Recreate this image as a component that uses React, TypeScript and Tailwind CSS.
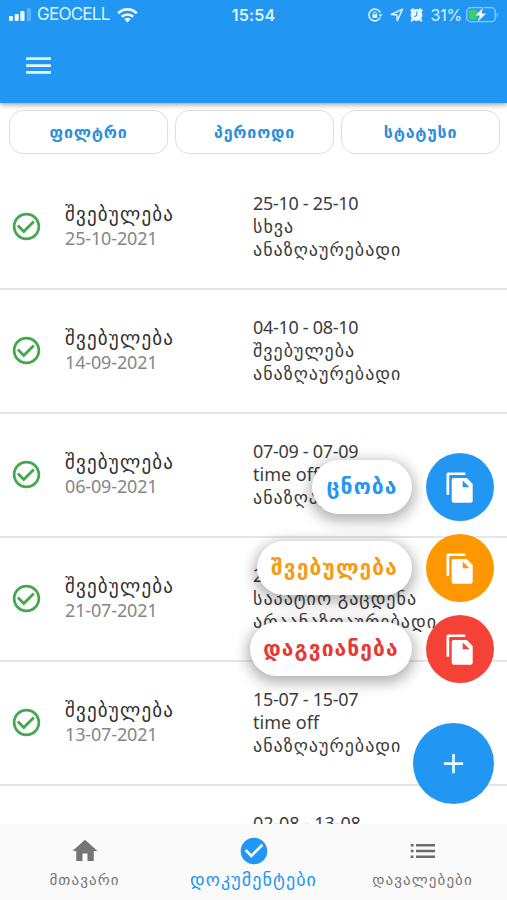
import { useState } from "react";
import {
  MdAdd,
  MdCheckCircle,
  MdCheckCircleOutline,
  MdHome,
  MdMenu,
} from "react-icons/md";

const filters = ["ფილტრი", "პერიოდი", "სტატუსი"];

const documents = [
  { date: "25-10-2021", period: "25-10 - 25-10", kind: "სხვა", pay: "ანაზღაურებადი" },
  { date: "14-09-2021", period: "04-10 - 08-10", kind: "შვებულება", pay: "ანაზღაურებადი" },
  { date: "06-09-2021", period: "07-09 - 07-09", kind: "time off", pay: "ანაზღაურებადი" },
  { date: "21-07-2021", period: "21-07 - 21-07", kind: "საპატიო გაცდენა", pay: "არაანაზღაურებადი" },
  { date: "13-07-2021", period: "15-07 - 15-07", kind: "time off", pay: "ანაზღაურებადი" },
];

const actions = [
  { label: "ცნობა", text: "text-[#2196f3]", bg: "bg-[#2196f3]", width: "w-[100px]" },
  { label: "შვებულება", text: "text-[#f59c13]", bg: "bg-[#ff9800]", width: "w-[155px]" },
  { label: "დაგვიანება", text: "text-[#e53935]", bg: "bg-[#f44336]", width: "w-[162px]" },
];

const StatusBar = () => (
  <div className="flex h-[29px] items-center px-[9px] font-['Inter',sans-serif] text-[#d9f3ff]">
    <div className="flex flex-1 items-center">
      <svg width="23" height="13" viewBox="0 0 23 13" fill="#e8faff">
        <rect x="0" y="8" width="4" height="5" rx="1" />
        <rect x="5.7" y="6" width="4" height="7" rx="1" />
        <rect x="11.3" y="3" width="4.2" height="10" rx="1" />
        <rect x="18" y="0" width="4" height="13" rx="1" opacity="0.3" />
      </svg>
      <span className="ml-[5px] text-[17px] tracking-[-0.75px]">GEOCELL</span>
      <svg className="ml-[7px]" width="21" height="16" viewBox="0 0 21 16" fill="none" stroke="#e8faff" strokeWidth="2.7">
        <path d="M1.2 6.2a13.2 13.2 0 0 1 18.6 0" />
        <path d="M4.8 9.8a8.2 8.2 0 0 1 11.4 0" />
        <path d="M7.3 12.2a4.7 4.7 0 0 1 6.4 0L10.5 15.5z" fill="#e8faff" stroke="none" />
      </svg>
    </div>
    <span className="text-[16px] font-semibold tracking-[0.2px]">15:54</span>
    <div className="flex flex-1 items-center justify-end">
      <svg width="15" height="14" viewBox="0 0 15 14" fill="none" stroke="#d9f3ff" strokeWidth="1.6">
        <path d="M12.2 4.5A5.9 5.9 0 1 0 12.2 9.5" />
        <path d="M10.4 6.2h4.2l-2.1 2.9z" fill="#d9f3ff" stroke="none" />
        <rect x="4.4" y="6.3" width="4.8" height="3.7" fill="#d9f3ff" stroke="none" />
        <path d="M5.3 6.5V5.3a1.5 1.5 0 0 1 3 0v1.2" strokeWidth="1" />
      </svg>
      <svg className="ml-[7px]" width="14" height="14" viewBox="0 0 14 14" fill="none" stroke="#d9f3ff" strokeWidth="1.5" strokeLinejoin="round">
        <path d="M12.5 1.3L1.3 6.4l5.5.7.5 5.5z" />
      </svg>
      <svg className="ml-[6px]" width="13" height="14" viewBox="0 0 13 14">
        <path d="M1.5 2.6L3 1.4M11.5 2.6L10 1.4M2.5 11.5l-.6 1M10.500 11.500l.6 1" stroke="#e8faff" strokeWidth="2.4" strokeLinecap="round" />
        <circle cx="6.5" cy="7" r="5.9" fill="#e8faff" />
        <path d="M6.8 3.5v4L4.3 8.8" fill="none" stroke="#2196f3" strokeWidth="1.1" />
      </svg>
      <span className="ml-[7px] text-[16px] tracking-[-0.2px]">31%</span>
      <svg className="ml-[4px] -mr-[1px]" width="33" height="18" viewBox="0 0 33 18">
        <rect x="0.7" y="1.7" width="28.6" height="14" rx="4" fill="none" stroke="#8fcbfa" strokeWidth="1.3" />
        <path d="M30.8 6.500c1.6.6 1.6 3.8 0 4.4z" fill="#8fcbfa" />
        <rect x="2.7" y="3.7" width="8.5" height="10" rx="2" fill="#3ccf6a" />
        <path d="M17.5 1L8.9 9.8h4.6L11 16.500l9.6-9.2h-4.8z" fill="#fff" stroke="#2196f3" strokeWidth="0.5" />
      </svg>
    </div>
  </div>
);

const ListIcon = () => (
  <svg width="26" height="30" viewBox="0 0 26 30" fill="#6b6b6b">
    <path d="M.7 8h2.8v2.6H.7zM.7 13.700h2.8v2.6H.7zM.7 19.400h2.8v2.6H.7zM6 8h19v2.6H6zM6 13.700h19v2.6H6zM6 19.400h19v2.6H6z" />
  </svg>
);

const CopyIcon = () => (
  <svg width="28" height="32" viewBox="0 0 28 32" fill="#fff">
    <path d="M.5 3a1.500 1.500 0 0 1 1.500-1.500h17.300v2.600H3.200v19.600H.5z" />
    <path
      fillRule="evenodd"
      d="M7.700 7h13l6 6v16.700a2 2 0 0 1-2 2h-17a2 2 0 0 1-2-2V9a2 2 0 0 1 2-2zm9 2.500v6.800h6.800z"
    />
  </svg>
);

const App = () => {
  const [activeTab, setActiveTab] = useState("documents");

  const tabs = [
    { id: "home", label: "მთავარი", icon: <MdHome size={30} /> },
    { id: "documents", label: "დოკუმენტები", icon: <MdCheckCircle size={32} /> },
    { id: "tasks", label: "დავალებები", icon: <ListIcon /> },
  ];

  return (
    <div className="relative flex h-[900px] w-[507px] flex-col overflow-hidden bg-white font-['Noto_Sans','DejaVu_Sans',sans-serif] text-[#3c3c3c]">
      <header className="relative z-10 h-[103px] shrink-0 bg-[#2196f3] shadow-[0_2px_5px_rgba(0,0,0,0.35)]">
        <StatusBar />
        <button className="ml-[22px] mt-[20px] block text-[#e3f8ff]">
          <MdMenu size={33} />
        </button>
      </header>

      <div className="flex h-[63px] shrink-0 gap-[7px] pl-[9px] pr-[7px] pt-[7px]">
        {filters.map((filter) => (
          <button
            key={filter}
            className="h-[44px] flex-1 rounded-[14px] border border-[#dedede] text-[16px] font-bold tracking-[0.8px] text-[#2c8fdb]"
          >
            {filter}
          </button>
        ))}
      </div>

      <main className="min-h-0 flex-1 overflow-hidden">
        {documents.map((doc) => (
          <div key={doc.date} className="flex h-[124px] items-center border-b-2 border-[#e6e6e6] pb-[2px]">
            <MdCheckCircleOutline size={33} className="ml-[10px] shrink-0 text-[#43a84c]" />
            <div className="ml-[22px] w-[188px] shrink-0 leading-[24px]">
              <p className="text-[19px] tracking-[1.2px] text-[#303030]">შვებულება</p>
              <p className="text-[18px] tracking-[-0.15px] text-[#868686]">{doc.date}</p>
            </div>
            <div className="whitespace-nowrap text-[18px] leading-[23px]">
              <p className="tracking-[-0.3px]">{doc.period}</p>
              <p className={doc.kind === "time off" ? "" : "tracking-[1px]"}>{doc.kind}</p>
              <p className="tracking-[1px]">{doc.pay}</p>
            </div>
          </div>
        ))}
        <p className="ml-[253px] mt-[26px] text-[18px] leading-[23px] tracking-[-0.1px]">02-08 - 13-08</p>
      </main>

      <nav className="flex h-[76px] shrink-0 bg-[#fafafa]">
        {tabs.map((tab) => (
          <button
            key={tab.id}
            onClick={() => setActiveTab(tab.id)}
            className={`flex flex-1 flex-col items-center pt-[11px] ${
              activeTab === tab.id
                ? "text-[18px] tracking-[1.1px] text-[#2196f3]"
                : "text-[15px] tracking-[1.1px] text-[#757575]"
            }`}
          >
            <span className="flex h-[32px] items-center">{tab.icon}</span>
            <span className="leading-[24px]">{tab.label}</span>
          </button>
        ))}
      </nav>

      {/* floating speed dial */}
      <div className="absolute bottom-[96px] right-[13px] flex flex-col items-end">
        {actions.map((action) => (
          <div key={action.label} className="mb-[13px] flex items-center gap-[14px]">
            <span
              className={`flex h-[54px] items-center justify-center rounded-full bg-white text-[21px] font-bold tracking-[1.1px] shadow-[0_4px_14px_3px_rgba(0,0,0,0.3)] ${action.width} ${action.text}`}
            >
              {action.label}
            </span>
            <button className={`flex h-[68px] w-[68px] items-center justify-center rounded-full text-white ${action.bg}`}>
              <CopyIcon />
            </button>
          </div>
        ))}
        <button className="mt-[27px] flex h-[81px] w-[81px] items-center justify-center rounded-full bg-[#2196f3] text-[#e3f8ff]">
          <MdAdd size={33} />
        </button>
      </div>
    </div>
  );
};

export default App;
